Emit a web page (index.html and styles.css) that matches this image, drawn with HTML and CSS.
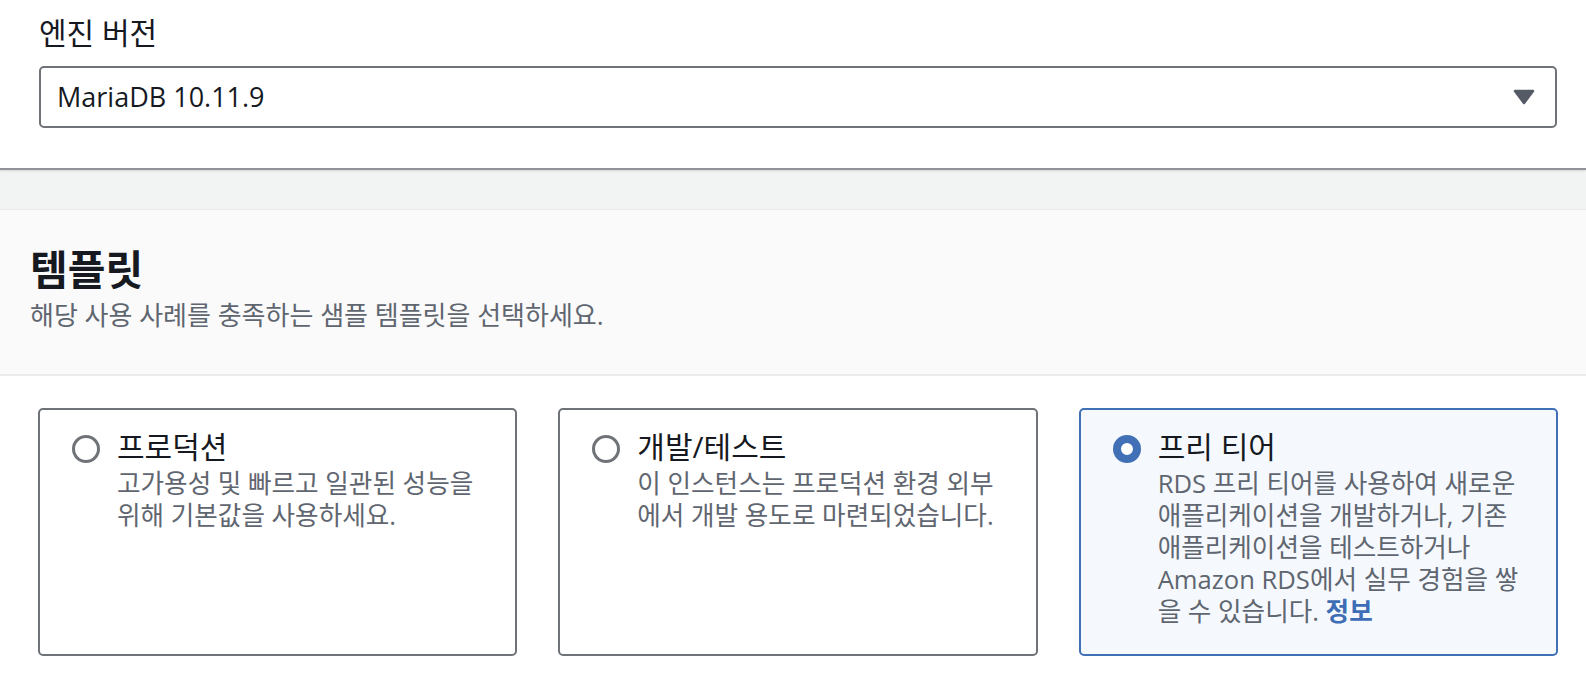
FILE: index.html
```html
<!DOCTYPE html>
<html lang="ko">
<head>
<meta charset="utf-8">
<link rel="stylesheet" href="styles.css">
</head>
<body>
<div class="top">
  <div class="field-label">엔진 버전</div>
  <div class="select">
    <span class="select-value">MariaDB 10.11.9</span>
    <svg class="caret" width="22" height="16" viewBox="0 0 22 16"><path d="M2 2 H20 L11 14 Z" fill="#545b64" stroke="#545b64" stroke-width="2.5" stroke-linejoin="round"/></svg>
  </div>
</div>
<div class="band"></div>
<div class="container">
  <div class="header">
    <h2 class="title">템플릿</h2>
    <p class="subtitle">해당 사용 사례를 충족하는 샘플 템플릿을 선택하세요.</p>
  </div>
  <div class="content">
    <div class="cards">
      <div class="card">
        <svg class="radio" width="28" height="28" viewBox="0 0 28 28"><circle cx="14" cy="14" r="12.5" fill="none" stroke="#6f7378" stroke-width="3"/></svg>
        <div class="card-body">
          <div class="card-title">프로덕션</div>
          <div class="card-desc"><div class="line">고가용성 및 빠르고 일관된 성능을</div><div class="line">위해 기본값을 사용하세요.</div></div>
        </div>
      </div>
      <div class="card">
        <svg class="radio" width="28" height="28" viewBox="0 0 28 28"><circle cx="14" cy="14" r="12.5" fill="none" stroke="#6f7378" stroke-width="3"/></svg>
        <div class="card-body">
          <div class="card-title">개발/테스트</div>
          <div class="card-desc"><div class="line">이 인스턴스는 프로덕션 환경 외부</div><div class="line">에서 개발 용도로 마련되었습니다.</div></div>
        </div>
      </div>
      <div class="card selected">
        <svg class="radio" width="28" height="28" viewBox="0 0 28 28"><circle cx="14" cy="14" r="10" fill="#fff" stroke="#4170b6" stroke-width="8"/></svg>
        <div class="card-body">
          <div class="card-title">프리 티어</div>
          <div class="card-desc"><div class="line">RDS 프리 티어를 사용하여 새로운</div><div class="line">애플리케이션을 개발하거나, 기존</div><div class="line">애플리케이션을 테스트하거나</div><div class="line">Amazon RDS에서 실무 경험을 쌓</div><div class="line">을 수 있습니다. <a class="info" href="#">정보</a></div></div>
        </div>
      </div>
    </div>
  </div>
</div>
</body>
</html>
```

FILE: styles.css
```css
html, body {
  margin: 0;
  padding: 0;
  background: #ffffff;
}
body {
  font-family: "Open Sans", "Noto Sans CJK KR", sans-serif;
  color: #16191f;
  width: 1586px;
  height: 692px;
  overflow: hidden;
}
.top {
  height: 170px;
  padding: 12px 29px 0 39px;
  box-sizing: border-box;
  border-bottom: 2px solid #8f9297;
  box-shadow: 0 1px 2px rgba(0, 0, 0, 0.12);
  position: relative;
  z-index: 1;
}
.field-label {
  font-size: 30px;
  line-height: 42px;
  color: #16191f;
  margin-bottom: 12px;
}
.select {
  height: 62px;
  box-sizing: border-box;
  border: 2px solid #6f7378;
  border-radius: 5px;
  display: flex;
  align-items: center;
  justify-content: space-between;
  padding: 0 20px 0 16px;
}
.select-value {
  font-size: 27px;
  line-height: 34px;
  color: #16191f;
}
.caret {
  display: block;
}
.band {
  height: 39px;
  background: #f2f3f3;
  border-bottom: 1px solid #e9ebed;
}
.header {
  background: #fafafa;
  height: 166px;
  box-sizing: border-box;
  padding: 32px 20px 0 30px;
  border-bottom: 2px solid #e9ebed;
}
.title {
  margin: 0;
  font-size: 41px;
  font-weight: 700;
  line-height: 54px;
  color: #16191f;
}
.subtitle {
  margin: 3px 0 0;
  font-size: 26px;
  line-height: 32px;
  color: #5f6670;
}
.content {
  padding: 32px 28px 0 38px;
}
.cards {
  display: grid;
  grid-template-columns: repeat(3, 1fr);
  column-gap: 41px;
}
.card {
  height: 248px;
  box-sizing: border-box;
  border: 2px solid #6f7378;
  border-radius: 5px;
  padding: 25px 16px 0 32px;
  display: flex;
  gap: 17px;
  align-items: flex-start;
  background: #ffffff;
}
.card.selected {
  border-color: #4170b6;
  background: #f5f9fe;
}
.radio {
  flex: none;
  display: block;
}
.card-body {
  margin-top: -8px;
}
.card-title {
  font-size: 30px;
  line-height: 40px;
  color: #16191f;
}
.card-desc {
  margin-top: 1px;
  font-size: 25.6px;
  color: #5f6670;
  white-space: nowrap;
}
.line {
  height: 32px;
  line-height: 32px;
}
.info {
  color: #3e6db5;
  font-weight: 700;
  text-decoration: none;
}
```
